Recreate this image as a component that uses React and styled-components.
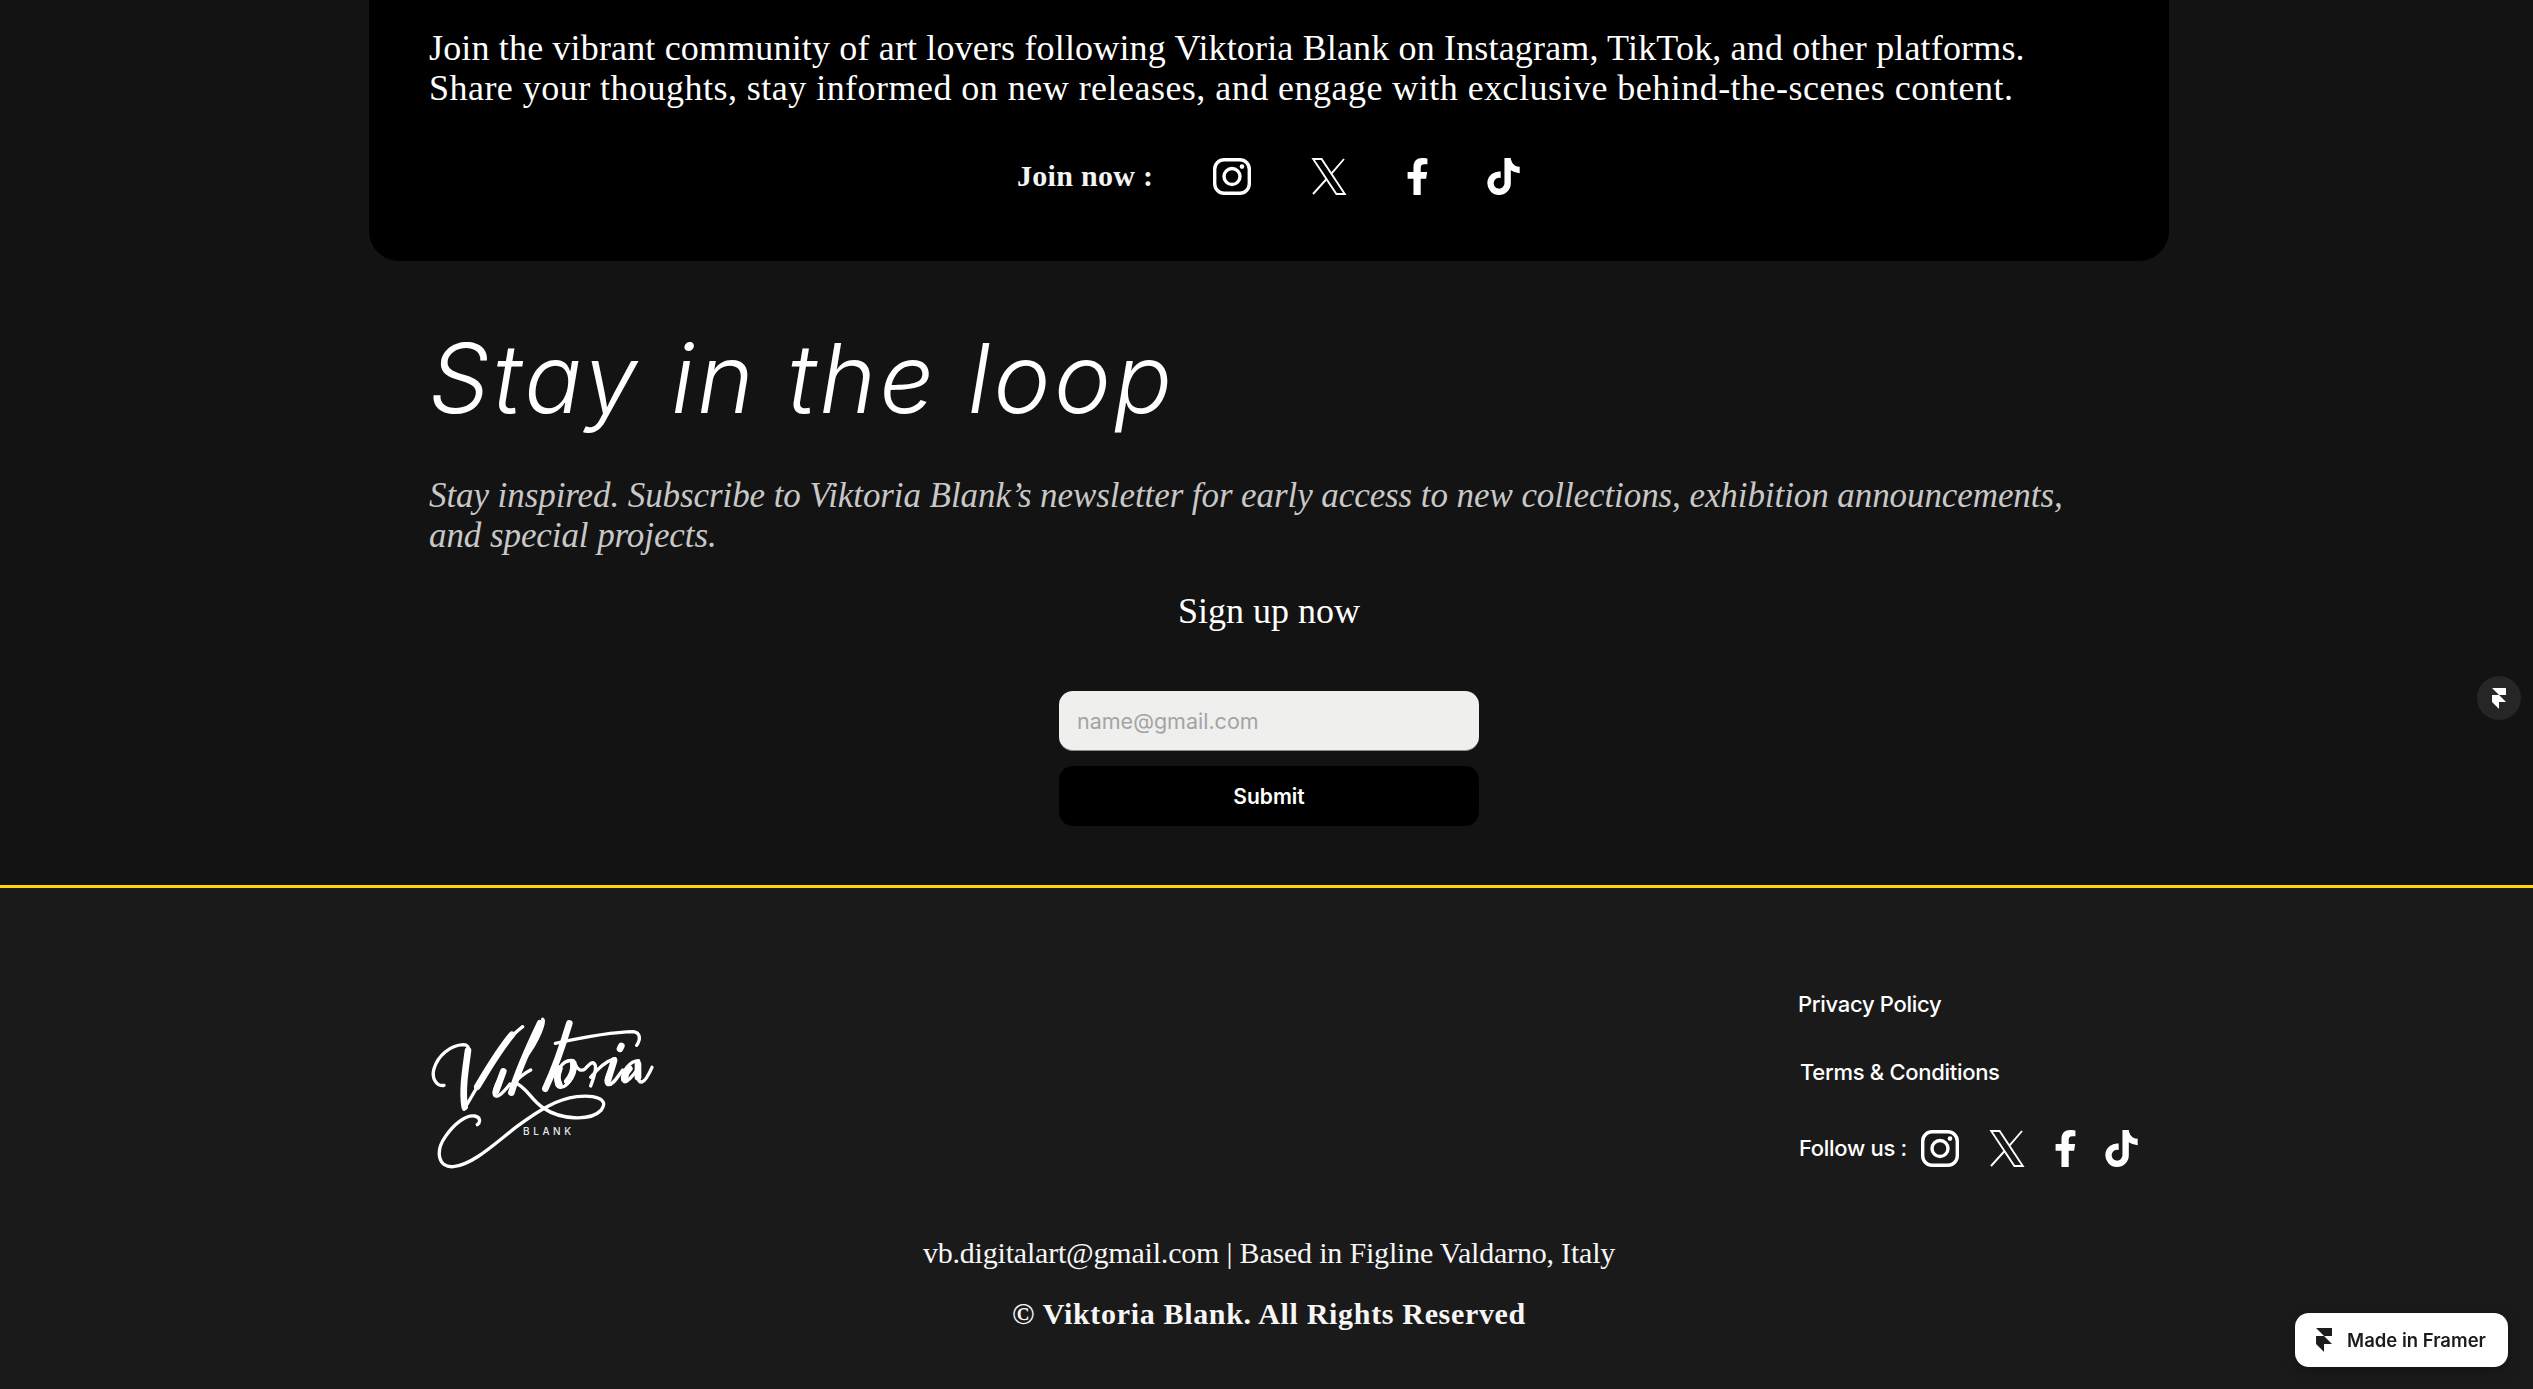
import React from "react";
import styled, { createGlobalStyle } from "styled-components";
import { FaFacebookF, FaTiktok } from "react-icons/fa";

const serif = `"Liberation Serif", "Times New Roman", serif`;
const sans = `Inter, "Liberation Sans", sans-serif`;

const GlobalStyle = createGlobalStyle`
  html, body { margin: 0; padding: 0; background: #131313; }
  body { overflow: hidden; }
  * { box-sizing: border-box; }
`;

const Page = styled.div`
  width: 2533px;
  height: 1389px;
  overflow: hidden;
  background: #131313;
  color: #fff;
`;

const Upper = styled.section`
  height: 888px;
  border-bottom: 3px solid #ffd60a;
`;

const Card = styled.div`
  width: 1800px;
  height: 261px;
  margin-left: 369px;
  padding: 28px 60px 0;
  background: #000;
  border-radius: 0 0 30px 30px;
`;

const Lead = styled.p`
  margin: 0;
  font: 400 36px/40px ${serif};
  letter-spacing: ${(p) => p.$track}px;
  white-space: nowrap;
`;

const JoinRow = styled.div`
  display: flex;
  align-items: center;
  height: 38px;
  margin-top: 49px;
  padding-left: 588px;
`;

const JoinLabel = styled.span`
  width: 196px;
  font: 700 30px/38px ${serif};
  letter-spacing: 0.3px;
  color: #f4f4f4;
`;

const IconSlot = styled.span`
  display: flex;
  align-items: center;
  justify-content: center;
  flex: none;
  width: ${(p) => p.$w}px;
  margin-right: ${(p) => p.$gap}px;
  color: #fff;

  svg {
    flex: none;
  }
`;

const Newsletter = styled.div`
  width: 1800px;
  margin-left: 369px;
  padding: 0 60px;
`;

const Heading = styled.h2`
  margin: 59px 0 0;
  font: italic 300 96px/116px ${sans};
  letter-spacing: 3.4px;
  white-space: nowrap;
`;

const Intro = styled.p`
  margin: 40px 0 0;
  font: italic 400 35px/40px ${serif};
  letter-spacing: -0.08px;
  color: #c8c8c8;
`;

const SignUp = styled.h3`
  margin: 35px 0 0;
  text-align: center;
  font: 400 36px/40px ${serif};
`;

const SignForm = styled.form`
  display: flex;
  flex-direction: column;
  gap: 15px;
  width: 420px;
  margin: 60px auto 0;
`;

const EmailInput = styled.input`
  width: 100%;
  height: 60px;
  padding: 0 18px;
  border: 0;
  border-bottom: 1px solid #8a8a8a;
  border-radius: 14px;
  background: #efefed;
  font: 400 21.5px ${sans};
  outline: none;

  &::placeholder {
    color: #a4a4a4;
    opacity: 1;
  }
`;

const SubmitButton = styled.button`
  height: 60px;
  border: 0;
  border-radius: 14px;
  background: #000;
  color: #fff;
  font: 600 21px ${sans};
`;

const Footer = styled.footer`
  height: 501px;
  background: #1a1a1a;
`;

const FooterInner = styled.div`
  display: flex;
  justify-content: space-between;
  width: 1800px;
  margin-left: 369px;
  padding: 100px 31px 0 31px;
`;

const Brand = styled.div`
  position: relative;
  width: 280px;
  height: 200px;
  margin-top: 2px;
`;

const BrandMark = styled.svg`
  display: block;
  width: 280px;
  height: 200px;
`;

const BrandSub = styled.span`
  position: absolute;
  left: 123px;
  top: 133px;
  font: 500 10px/16px ${sans};
  letter-spacing: 3.6px;
  color: #e8e8e8;
`;

const FooterLinks = styled.nav`
  display: flex;
  flex-direction: column;
  align-items: flex-start;
`;

const FooterLink = styled.a`
  margin-left: ${(p) => p.$nudge || 0}px;
  margin-bottom: ${(p) => p.$below}px;
  font: 450 22px/32px ${sans};
  letter-spacing: -0.3px;
  color: #fff;
`;

const FollowRow = styled.div`
  display: flex;
  align-items: center;
  height: 38px;
  margin-left: 1px;
`;

const FollowLabel = styled.span`
  width: 122px;
  font: 450 22px/38px ${sans};
  letter-spacing: -0.3px;
`;

const Contact = styled.p`
  margin: 0;
  padding-top: 43px;
  padding-left: 5px;
  text-align: center;
  font: 400 30px/40px ${serif};
  letter-spacing: -0.2px;
  color: #f6f6f6;
`;

const Copyright = styled.p`
  margin: 21px 0 0;
  padding-left: 5px;
  text-align: center;
  font: 700 30px/40px ${serif};
  letter-spacing: 0.67px;
  color: #f6f6f6;
`;

const MadeBadge = styled.a`
  position: fixed;
  left: 2295px;
  top: 1313px;
  display: flex;
  align-items: center;
  gap: 15px;
  width: 213px;
  height: 54px;
  padding-left: 21px;
  border-radius: 14px;
  background: #fff;
  color: #1c1c1c;
  font: 600 18.5px ${sans};
  white-space: nowrap;
  box-shadow: 0 4px 14px rgba(0, 0, 0, 0.25);
`;

const EditBubble = styled.span`
  position: fixed;
  left: 2477px;
  top: 676px;
  display: flex;
  align-items: center;
  justify-content: center;
  width: 44px;
  height: 44px;
  border-radius: 50%;
  background: #262626;
  color: #fff;
`;

const FramerMark = ({ size = 24 }) => (
  <svg width={size * 0.67} height={size} viewBox="4 0 16 24" fill="currentColor">
    <path d="M4 0h16v8h-8L4 0zM4 8h8l8 8H4V8zM4 16h8v8l-8-8z" />
  </svg>
);

const InstagramIcon = () => (
  <svg width="38" height="37" viewBox="0 0 38 37" fill="none" stroke="currentColor" strokeWidth="3.4">
    <rect x="1.7" y="1.7" width="34.6" height="33.6" rx="9.5" />
    <circle cx="19" cy="18.5" r="8" />
    <circle cx="29" cy="8.6" r="2.3" fill="currentColor" stroke="none" />
  </svg>
);

const XIcon = () => (
  <svg width="36" height="37" viewBox="0 0 36 37" fill="none" stroke="currentColor" strokeWidth="1.9">
    <path d="M2.2 1H10.6L33.8 36H25.4Z" />
    <path d="M33 1L20.4 15.6M15.6 21L2 36" />
  </svg>
);

const Socials = ({ gaps }) => (
  <>
    <IconSlot $w={38} $gap={gaps[0]}>
      <InstagramIcon />
    </IconSlot>
    <IconSlot $w={36} $gap={gaps[1]}>
      <XIcon />
    </IconSlot>
    <IconSlot $w={20} $gap={gaps[2]}>
      <FaFacebookF size={37} />
    </IconSlot>
    <IconSlot $w={33} $gap={0}>
      <FaTiktok size={37} />
    </IconSlot>
  </>
);

// hand drawn signature, coordinates are in a 840x600 box
const Signature = () => (
  <BrandMark viewBox="0 0 840 600" fill="none" stroke="#fff" strokeLinecap="round" strokeLinejoin="round">
    <g strokeWidth="10">
      <path d="M132 286C108 290 94 262 102 236C114 196 150 166 190 164C202 164 208 172 206 184" />
      <path d="M192 358C240 280 300 160 368 110" />
      <path d="M312 242C296 270 276 304 284 316C294 326 316 300 330 282" />
      <path d="M428 88C436 92 418 150 372 208" />
      <path d="M392 240C372 250 350 268 344 278C380 290 392 330 430 354C480 388 570 396 604 360C630 326 580 314 530 320C470 328 420 358 350 410C290 456 220 524 160 530C116 534 104 486 136 440C160 404 196 374 224 378C242 382 242 396 232 404" />
      <path d="M466 160C540 144 640 126 700 125C722 128 722 148 710 166" />
      <path d="M520 212C486 206 462 250 470 284C480 306 520 282 526 224C532 238 544 246 556 236C566 226 578 208 586 226C590 244 578 270 572 288" />
      <path d="M572 262C590 240 618 214 644 206" />
      <path d="M646 206C630 240 608 276 624 284C640 286 654 258 668 240" />
      <path d="M716 212C690 212 664 246 668 270C676 284 700 258 716 232C712 254 712 278 726 276C738 272 748 250 756 232" />
    </g>
    <g strokeWidth="20">
      <path d="M204 182C196 240 186 300 194 350" />
      <path d="M232 290C264 236 300 176 336 134" />
      <path d="M310 244L288 304" />
      <path d="M420 100C396 150 352 250 334 308" />
      <path d="M508 100C490 160 462 240 436 296" />
      <path d="M478 236C470 256 472 274 478 284" />
      <path d="M520 220C522 236 516 258 502 274" />
      <path d="M642 212L624 270" />
      <path d="M714 222L714 262" />
      <path d="M660 176L664 168" />
      <path d="M688 236C678 246 674 260 676 270" />
    </g>
  </BrandMark>
);

export default function App() {
  return (
    <Page>
      <GlobalStyle />
      <Upper>
        <Card>
          <Lead $track={0.16}>Join the vibrant community of art lovers following Viktoria Blank on Instagram, TikTok, and other platforms.</Lead>
          <Lead $track={0.47}>Share your thoughts, stay informed on new releases, and engage with exclusive behind-the-scenes content.</Lead>
          <JoinRow>
            <JoinLabel>Join now :</JoinLabel>
            <Socials gaps={[60, 60, 60]} />
          </JoinRow>
        </Card>
        <Newsletter>
          <Heading>Stay in the loop</Heading>
          <Intro>
            Stay inspired. Subscribe to Viktoria Blank’s newsletter for early access to new collections, exhibition announcements, and special projects.
          </Intro>
          <SignUp>Sign up now</SignUp>
          <SignForm onSubmit={(e) => e.preventDefault()}>
            <EmailInput type="email" placeholder="name@gmail.com" />
            <SubmitButton type="submit">Submit</SubmitButton>
          </SignForm>
        </Newsletter>
      </Upper>
      <Footer>
        <FooterInner>
          <Brand>
            <Signature />
            <BrandSub>BLANK</BrandSub>
          </Brand>
          <FooterLinks>
            <FooterLink $below={36}>Privacy Policy</FooterLink>
            <FooterLink $below={41} $nudge={2}>Terms &amp; Conditions</FooterLink>
            <FollowRow>
              <FollowLabel>Follow us :</FollowLabel>
              <Socials gaps={[30, 30, 30]} />
            </FollowRow>
          </FooterLinks>
        </FooterInner>
        <Contact>vb.digitalart@gmail.com | Based in Figline Valdarno, Italy</Contact>
        <Copyright>© Viktoria Blank. All Rights Reserved</Copyright>
      </Footer>
      <EditBubble>
        <FramerMark size={21} />
      </EditBubble>
      <MadeBadge>
        <FramerMark size={24} />
        Made in Framer
      </MadeBadge>
    </Page>
  );
}
